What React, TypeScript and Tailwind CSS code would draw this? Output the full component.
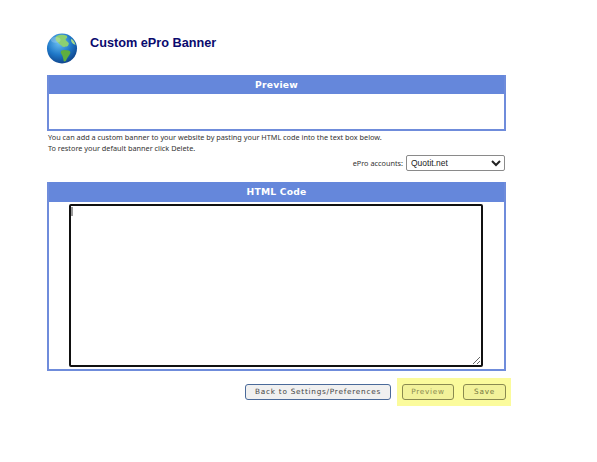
const sans = "font-['Liberation_Sans',Arial,sans-serif]";
const verdana = "font-['DejaVu_Sans',Verdana,sans-serif]";
const noto = "font-['Noto_Sans',Tahoma,sans-serif]";

function Globe() {
  return (
    <svg width="32" height="31" viewBox="0 0 33 32" className="shrink-0 -ml-px">
      <defs>
        <radialGradient id="sea" cx="40%" cy="30%" r="75%">
          <stop offset="0%" stopColor="#6cc0f2" />
          <stop offset="55%" stopColor="#1f78c8" />
          <stop offset="100%" stopColor="#0d3f86" />
        </radialGradient>
      </defs>
      <circle cx="16.5" cy="16" r="15.5" fill="url(#sea)" />
      <path d="M11 3c3-1.500 7-1.500 10-.5 1.500 1 1 3-.5 3.500-1 2 2 3 3 4.500 0 2-1 3.500-3.500 3.500-2 1-3 .5-4-1-2-1-3-3-4.500-4C10 8 9 5 11 3Z" fill="#8ccf72" />
      <path d="M16 18c2-1 5-.5 7.500 0 2 1 2 2.500 1 4-1 2-3 4-4 7-1.500 1-2.500 .5-2.500-1.500-.5-2.500-1-4-2-5.500-1-1.500-1-3 0-4Z" fill="#5fae3f" />
      <path d="M26 6c2 1 3.500 3.500 4.500 6-1.500 0-3-1-4-2.500-.7-1-.8-2.300-.5-3.500Z" fill="#a6d98a" />
      <ellipse cx="10" cy="7" rx="5" ry="3" fill="#ffffff" opacity="0.2" />
    </svg>
  );
}

function Panel({ title, headerClass, children }: { title: string; headerClass: string; children: React.ReactNode }) {
  return (
    <section className="border-2 border-[#6f8cdb] border-t-0 bg-white">
      <h2 className={`bg-[#6587db] text-white text-[9.200px] font-bold text-center tracking-[0.2px] flex items-center justify-center ${headerClass} ${verdana}`}>
        {title}
      </h2>
      {children}
    </section>
  );
}

function Button({ label, className }: { label: string; className: string }) {
  return (
    <button className={`h-[16px] rounded-[3px] border text-[7.300px] tracking-[0.75px] leading-none whitespace-nowrap ${verdana} ${className}`}>
      {label}
    </button>
  );
}

export default function App() {
  return (
    <div className={`w-[597px] h-[462px] bg-white overflow-hidden pl-[47px] pr-[91px] pt-[33px] ${sans}`}>
      <header className="flex h-[42px] gap-[12px] items-start">
        <Globe />
        <h1 className="text-[#0a0a6e] text-[12.7px] font-bold leading-[18px] mt-px">Custom ePro Banner</h1>
      </header>

      <Panel title="Preview" headerClass="h-[19px]">
        <div className="h-[35px]" />
      </Panel>

      <div className={`text-[#333] text-[7.300px] leading-[11px] mt-[1px] pl-px ${noto}`}>
        <p>You can add a custom banner to your website by pasting your HTML code into the text box below.</p>
        <p>To restore your default banner click Delete.</p>
      </div>

      <div className="flex justify-end items-center gap-[3px] mt-[1px] pr-px">
        <span className={`text-[#333] text-[7.300px] ${noto}`}>ePro accounts:</span>
        <select className={`w-[99px] h-[16px] bg-white rounded-[2px] border border-[#8a8a8a] text-[8.500px] text-[#222] ${sans}`}>
          <option>Quotit.net</option>
        </select>
      </div>

      <div className="mt-[11px]">
        <Panel title="HTML Code" headerClass="h-[20px]">
          <div className="h-[167px] pl-[20px] pt-[2px]">
            <div className="relative w-[414px]">
              <textarea className="block w-[414px] h-[163px] bg-white border-2 border-[#111] rounded-[2px] resize-y" />
              <span className="absolute left-[2px] top-[3px] w-[2px] h-[9px] bg-[#999]" />
            </div>
          </div>
        </Panel>
      </div>

      <div className="flex justify-end items-center mt-[7px] -mr-[5px]">
        <Button
          label="Back to Settings/Preferences"
          className="w-[146px] mr-[6px] bg-[#f0f0f0] border-[#4a6a9a] text-[#444]"
        />
        <div className="flex items-center gap-[9px] bg-[#fbfb9c] w-[114px] h-[28px] pl-[5px]">
          <Button label="Preview" className="w-[52px] bg-[#f2f29a] border-[#8a8a50] text-[#8a8a50]" />
          <Button label="Save" className="w-[43px] bg-[#f2f29a] border-[#8a8a50] text-[#77773f]" />
        </div>
      </div>
    </div>
  );
}
